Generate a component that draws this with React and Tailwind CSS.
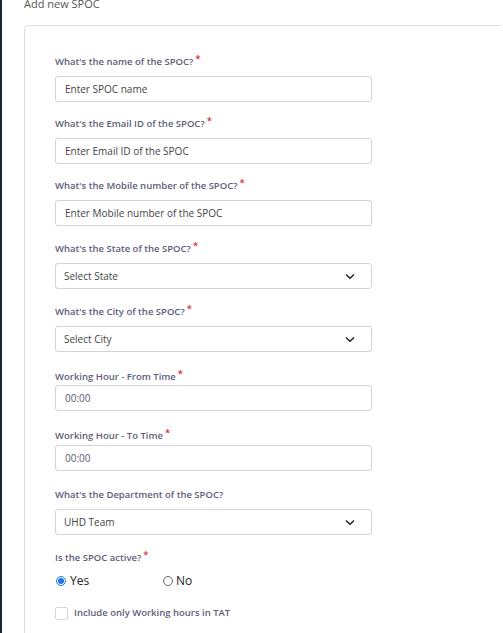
import React from "react";

const Label = ({ children, req = true, mb = "mb-[8px]" }) => (
  <div className={`text-[9.5px] font-semibold text-[#5e5e78] leading-[12px] ${mb}`}>
    {children}
    {req && <span className="text-[#e0262e] ml-[2px] relative top-[-3px]">*</span>}
  </div>
);

const Input = ({ placeholder, dark }) => (
  <div className={`h-[26px] w-[317px] rounded-[3px] border border-[#cfd3dc] bg-white flex items-center pl-[9px] text-[10px] ${dark ? "text-[#5a5a6e]" : "text-[#444]"}`}>
    {placeholder}
  </div>
);

const Select = ({ value }) => (
  <div className="h-[26px] w-[317px] rounded-[3px] border border-[#cfd3dc] bg-white flex items-center justify-between pl-[8px] pr-[16px] text-[10px] text-[#444]">
    <span>{value}</span>
    <svg width="10" height="7" viewBox="0 0 10 7">
      <path d="M1 1.5 L5 5.2 L9 1.5" fill="none" stroke="#222" strokeWidth="1.5" />
    </svg>
  </div>
);

export default function App() {
  return (
    <div className="w-[503px] h-[633px] overflow-hidden bg-white flex" style={{ fontFamily: '"Open Sans", "Noto Sans", sans-serif' }}>
      <div className="w-[2px] h-full bg-[#1d2535] shrink-0" />
      <div className="flex-1 pl-[22px] pr-[2px]">
        <div className="text-[11px] text-[#555] leading-[14px] mt-[-3px]">Add new SPOC</div>
        <div className="mt-[14px] border-l border-t border-[#dcdcdc] rounded-tl-[5px] h-[700px] pl-[30px] pt-[30px]">
          <Label>What's the name of the SPOC?</Label>
          <Input placeholder="Enter SPOC name" />
          <div className="h-[16px]" />
          <Label>What's the Email ID of the SPOC?</Label>
          <Input placeholder="Enter Email ID of the SPOC" />
          <div className="h-[16px]" />
          <Label>What's the Mobile number of the SPOC?</Label>
          <Input placeholder="Enter Mobile number of the SPOC" />
          <div className="h-[17px]" />
          <Label>What's the State of the SPOC?</Label>
          <Select value="Select State" />
          <div className="h-[17px]" />
          <Label>What's the City of the SPOC?</Label>
          <Select value="Select City" />
          <div className="h-[19px]" />
          <Label mb="mb-[2px]">Working Hour - From Time</Label>
          <Input placeholder="00:00" dark />
          <div className="h-[19px]" />
          <Label mb="mb-[3px]">Working Hour - To Time</Label>
          <Input placeholder="00:00" dark />
          <div className="h-[18px]" />
          <Label req={false}>What's the Department of the SPOC?</Label>
          <Select value="UHD Team" />
          <div className="h-[17px]" />
          <Label mb="mb-[9px]">Is the SPOC active?</Label>
          <div className="flex items-center text-[12px] text-[#222] h-[16px]">
            <div className="flex items-center w-[108px]">
              <span className="w-[10px] h-[10px] rounded-full border border-[#1a73e8] flex items-center justify-center ml-[1px] mr-[4px]">
                <span className="w-[6px] h-[6px] rounded-full bg-[#1a73e8]" />
              </span>
              Yes
            </div>
            <div className="flex items-center">
              <span className="w-[10px] h-[10px] rounded-full border border-[#666] mr-[3px]" />
              No
            </div>
          </div>
          <div className="flex items-center mt-[17px]">
            <span className="w-[13px] h-[13px] rounded-[2px] border border-[#d3d6e0] mr-[6px]" />
            <span className="text-[9.5px] font-semibold text-[#5e5e78]">Include only Working hours in TAT</span>
          </div>
        </div>
      </div>
    </div>
  );
}
